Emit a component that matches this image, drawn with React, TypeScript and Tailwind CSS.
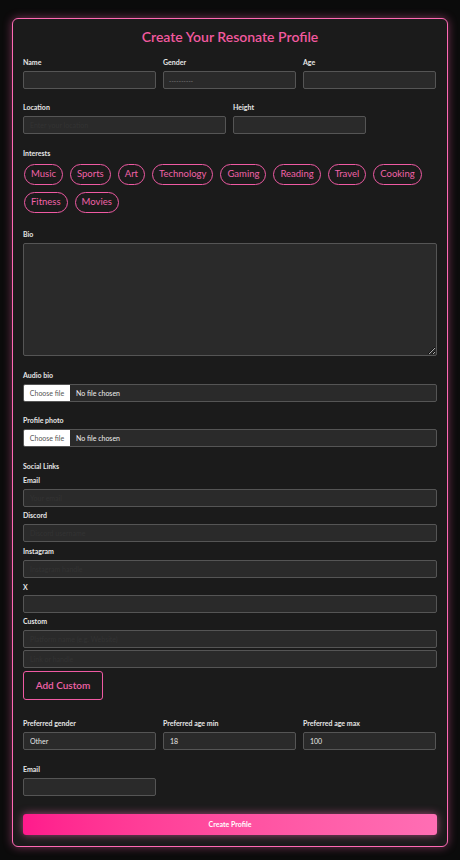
import React from "react";

const font = { fontFamily: "Lato, 'Noto Sans', sans-serif" };

function Label({ children, className = "" }: { children: React.ReactNode; className?: string }) {
  return (
    <div className={"h-[9px] text-[7px] leading-[9px] font-bold text-[#e6e6e6] " + className}>{children}</div>
  );
}

function Input({ value = "", placeholder = "", className = "" }: { value?: string; placeholder?: string; className?: string }) {
  return (
    <input
      readOnly
      defaultValue={value}
      placeholder={placeholder}
      className={
        "block h-[18px] rounded-[2px] border border-[#555555] bg-[#2a2a2a] px-[6px] text-[7px] text-[#e6e6e6] outline-none placeholder:text-[#333333] " +
        className
      }
      style={font}
    />
  );
}

function FileInput() {
  return (
    <div className="flex h-[18px] w-full items-stretch overflow-hidden rounded-[2px] border border-[#555555] bg-[#2a2a2a]">
      <div className="flex w-[46px] items-center justify-center bg-white text-[7px] text-[#555]">Choose file</div>
      <div className="flex items-center pl-[6px] text-[7px] text-[#eeeeee]">No file chosen</div>
    </div>
  );
}

const interests = ["Music", "Sports", "Art", "Technology", "Gaming", "Reading", "Travel", "Cooking", "Fitness", "Movies"];

export default function App() {
  return (
    <div className="min-h-[860px] w-[460px] bg-[#0b0b0b] pt-[18px] pb-[15px]" style={font}>
      <div className="mx-[12px] rounded-[6px] border border-[#ff69b4] bg-[#1b1b1b] px-[10px] pt-[9px] pb-[11px] shadow-[0_0_10px_rgba(255,105,180,0.45)]">
        <h1 className="text-center text-[14px] font-semibold leading-[18px] text-[#f2599f]">Create Your Resonate Profile</h1>

        <div className="mt-[12px] flex gap-[7px]">
          {[
            ["Name", ""],
            ["Gender", "dash"],
            ["Age", ""],
          ].map(([l, v]) => (
            <div key={l} className="w-[133px]">
              <Label>{l}</Label>
              {v === "dash" ? (
                <div className="mt-[4px] flex h-[18px] items-center rounded-[2px] border border-[#555555] bg-[#2a2a2a] px-[5px] text-[6px] tracking-[0.2px] text-[#9a9a9a]">
                  ----------
                </div>
              ) : (
                <Input className="mt-[4px] w-full" />
              )}
            </div>
          ))}
        </div>

        <div className="mt-[14px] flex gap-[7px]">
          <div className="w-[203px]">
            <Label>Location</Label>
            <Input className="mt-[4px] w-full" placeholder="Enter your location" />
          </div>
          <div className="w-[133px]">
            <Label>Height</Label>
            <Input className="mt-[4px] w-full" />
          </div>
        </div>

        <Label className="mt-[15px]">Interests</Label>
        <div className="mt-[6px] flex flex-wrap gap-x-[7px] gap-y-[7px] pl-[1px]">
          {interests.map((i) => (
            <div
              key={i}
              className="flex h-[21px] items-center rounded-full border border-[#ef5aa3] px-[6px] text-[9.5px] text-[#f062a8]"
            >
              {i}
            </div>
          ))}
        </div>

        <Label className="mt-[17px]">Bio</Label>
        <textarea
          readOnly
          className="mt-[4px] block h-[113px] w-full rounded-[2px] border border-[#555555] bg-[#2a2a2a] outline-none"
        />

        <Label className="mt-[15px]">Audio bio</Label>
        <div className="mt-[4px]">
          <FileInput />
        </div>

        <Label className="mt-[14px]">Profile photo</Label>
        <div className="mt-[4px]">
          <FileInput />
        </div>

        <Label className="mt-[15px]">Social Links</Label>
        <Label className="mt-[5px]">Email</Label>
        <Input className="mt-[4px] w-full" placeholder="Your email" />
        <Label className="mt-[4px]">Discord</Label>
        <Input className="mt-[4px] w-full" placeholder="Discord username" />
        <Label className="mt-[5px]">Instagram</Label>
        <Input className="mt-[4px] w-full" placeholder="Instagram handle" />
        <Label className="mt-[5px]">X</Label>
        <Input className="mt-[3px] w-full" placeholder="" />
        <Label className="mt-[4px]">Custom</Label>
        <Input className="mt-[4px] w-full" placeholder="Platform name (e.g. Website)" />
        <Input className="mt-[2px] w-full" placeholder="Link or handle" />
        <button className="mt-[3px] flex h-[29px] w-[80px] items-center justify-center rounded-[3px] border border-[#ef5aa3] text-[10px] font-semibold text-[#f062a8]">
          Add Custom
        </button>

        <div className="mt-[19px] flex gap-[7px]">
          {[
            ["Preferred gender", "Other"],
            ["Preferred age min", "18"],
            ["Preferred age max", "100"],
          ].map(([l, v]) => (
            <div key={l} className="w-[133px]">
              <Label>{l}</Label>
              <Input className="mt-[4px] w-full" value={v} />
            </div>
          ))}
        </div>

        <Label className="mt-[15px]">Email</Label>
        <Input className="mt-[4px] w-[133px]" />

        <button className="mt-[18px] flex h-[21px] w-full items-center justify-center rounded-[3px] bg-gradient-to-r from-[#ff1a8c] to-[#ff6eb4] text-[7px] font-bold text-white shadow-[0_0_8px_rgba(255,105,180,0.6)]">
          Create Profile
        </button>
      </div>
    </div>
  );
}
